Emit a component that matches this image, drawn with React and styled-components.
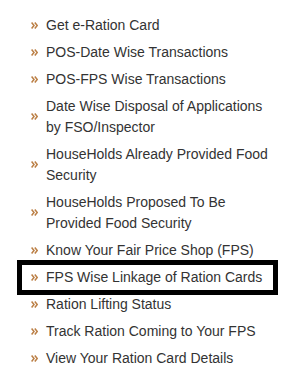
import React from "react";
import styled, { createGlobalStyle } from "styled-components";

const Global = createGlobalStyle`
  html, body { margin: 0; padding: 0; background: #fff; }
  body { font-family: "Liberation Sans", Arial, sans-serif; }
`;

const List = styled.ul`
  list-style: none;
  margin: 0 0 0 21px;
  padding: 11.5px 0 0 0;
  width: 253px;
  display: flex;
  flex-direction: column;
`;

const Item = styled.li`
  display: flex;
  align-items: center;
  gap: 8px;
  padding: 3px 0 3px 10px;
  font-size: 14px;
  line-height: 21px;
  color: #333;
  outline: ${(p) => (p.$highlight ? "5px solid #000" : "none")};
  outline-offset: -1px;
`;

const Arrow = styled.svg`
  flex: 0 0 auto;
  width: 7px;
  height: 7px;
`;

const Label = styled.span`
  flex: 1 1 auto;
`;

const items = [
  ["Get e-Ration Card"],
  ["POS-Date Wise Transactions"],
  ["POS-FPS Wise Transactions"],
  ["Date Wise Disposal of Applications", "by FSO/Inspector"],
  ["HouseHolds Already Provided Food", "Security"],
  ["HouseHolds Proposed To Be", "Provided Food Security"],
  ["Know Your Fair Price Shop (FPS)"],
  ["FPS Wise Linkage of Ration Cards", null, true],
  ["Ration Lifting Status"],
  ["Track Ration Coming to Your FPS"],
  ["View Your Ration Card Details"],
];

function Chevrons() {
  return (
    <Arrow viewBox="0 0 7 7">
      <path d="M0.6 0.6 L3 3.5 L0.6 6.4" fill="none" stroke="#bb7f45" strokeWidth="1.5" />
      <path d="M3.8 0.6 L6.2 3.5 L3.8 6.4" fill="none" stroke="#bb7f45" strokeWidth="1.5" />
    </Arrow>
  );
}

export default function App() {
  return (
    <>
      <Global />
      <List>
        {items.map(([a, b, hl], i) => (
          <Item key={i} $highlight={hl}>
            <Chevrons />
            <Label>
              {a}
              {b && <br />}
              {b}
            </Label>
          </Item>
        ))}
      </List>
    </>
  );
}
